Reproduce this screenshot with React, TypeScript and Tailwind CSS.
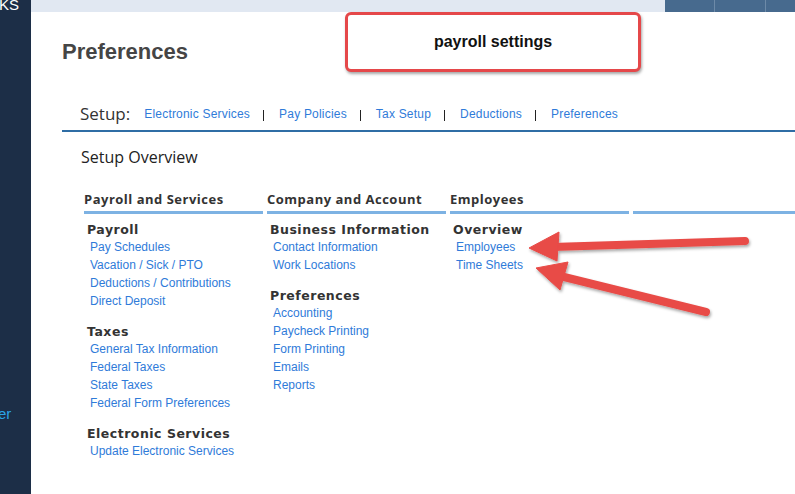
const columns = [
  {
    title: 'Payroll and Services',
    groups: [
      { name: 'Payroll', links: ['Pay Schedules', 'Vacation / Sick / PTO', 'Deductions / Contributions', 'Direct Deposit'] },
      { name: 'Taxes', links: ['General Tax Information', 'Federal Taxes', 'State Taxes', 'Federal Form Preferences'] },
      { name: 'Electronic Services', links: ['Update Electronic Services'] },
    ],
  },
  {
    title: 'Company and Account',
    groups: [
      { name: 'Business Information', links: ['Contact Information', 'Work Locations'] },
      { name: 'Preferences', links: ['Accounting', 'Paycheck Printing', 'Form Printing', 'Emails', 'Reports'] },
    ],
  },
  {
    title: 'Employees',
    groups: [{ name: 'Overview', links: ['Employees', 'Time Sheets'] }],
  },
  { title: '', groups: [] },
];

const setupLinks = ['Electronic Services', 'Pay Policies', 'Tax Setup', 'Deductions', 'Preferences'];

export default function App() {
  return (
    <div className="relative flex h-[494px] w-[795px] overflow-hidden bg-white font-['Liberation_Sans',Arial,sans-serif]">
      {/* Sidebar */}
      <div className="flex w-[31px] shrink-0 flex-col bg-[#1c2e47]">
        <div className="-ml-[1px] mt-[-4px] text-[15px] leading-[18px] text-white">KS</div>
        <div className="-ml-[2px] mt-[389px] text-[15px] text-[#2aa4e6]">er</div>
      </div>

      {/* Main */}
      <div className="flex flex-1 flex-col">
        <div className="flex h-[12px] bg-[#e1e8f2]">
          <div className="flex-1" />
          <div className="flex w-[130px] bg-[#476a8e]">
            <div className="w-[50px] border-r border-[#6d8aa8]" />
            <div className="w-[51px] border-r border-[#6d8aa8]" />
            <div className="flex-1" />
          </div>
        </div>

        <h1 className="ml-[31px] mt-[27px] text-[22px] font-bold leading-[26px] text-[#454545]">Preferences</h1>

        <div className="ml-[31px] mt-[38px] flex items-center border-b-2 border-[#2f6da5] pb-[5px] pl-[18px]">
          <span className="font-['Open_Sans',sans-serif] text-[17px] leading-[22px] text-[#333]">Setup:</span>
          <div className="ml-[14px] flex items-center text-[12px] tracking-[0.2px] text-[#2f7bd9]">
            {setupLinks.map((l, i) => (
              <span key={l} className="flex items-center">
                {i > 0 && <span className="ml-[13px] mr-[15px] mt-[2px] h-[11px] w-[1px] bg-[#222]" />}
                <span>{l}</span>
              </span>
            ))}
          </div>
        </div>

        <h2 className="ml-[50px] mt-[14px] font-['Open_Sans',sans-serif] text-[16px] leading-[22px] text-[#222]">Setup Overview</h2>

        <div className="ml-[53px] mt-[23px] grid grid-cols-[179px_179px_179px_1fr] gap-x-[4px]">
          {columns.map((c, ci) => (
            <div key={ci} className="flex flex-col">
              <div className="h-[20px] font-['Open_Sans',sans-serif] text-[13px] font-bold leading-[16px] tracking-[0.5px] text-[#333]">{c.title}</div>
              <div className="h-[3px] bg-[#7db2e3]" />
              <div className="mt-[8px] flex flex-col pl-[3px]">
                {c.groups.map((g, gi) => (
                  <div key={g.name} className={gi > 0 ? 'mt-[14px]' : ''}>
                    <div className="font-['DejaVu_Sans',sans-serif] text-[12.5px] font-bold leading-[16px] tracking-[0.5px] text-[#333]">{g.name}</div>
                    {g.links.map((l) => (
                      <div key={l} className="pl-[3px] text-[12px] leading-[18px] text-[#2f7bd9]">{l}</div>
                    ))}
                  </div>
                ))}
              </div>
            </div>
          ))}
        </div>
      </div>

      {/* Callout */}
      <div className="absolute left-[345px] top-[12px] flex h-[60px] w-[296px] items-center justify-center rounded-[6px] border-[3px] border-[#e5484a] bg-white shadow-[1px_2px_3px_rgba(0,0,0,0.35)]">
        <span className="text-[16px] font-bold text-[#111]">payroll settings</span>
      </div>

      {/* Arrows */}
      <svg className="absolute left-0 top-0" width="795" height="494" viewBox="0 0 795 494">
        <defs>
          <filter id="sh" x="-10%" y="-30%" width="120%" height="160%">
            <feDropShadow dx="1" dy="2" stdDeviation="1.5" floodColor="#000" floodOpacity="0.35" />
          </filter>
        </defs>
        <g fill="#e84b47" stroke="#e84b47" filter="url(#sh)">
          <line x1="745" y1="241" x2="552" y2="247" strokeWidth="8" strokeLinecap="round" />
          <polygon points="529,248 559,232 557,261" strokeWidth="1" strokeLinejoin="round" />
          <line x1="706" y1="312" x2="560" y2="276" strokeWidth="8" strokeLinecap="round" />
          <polygon points="536,268 568,262 560,290" strokeWidth="1" strokeLinejoin="round" />
        </g>
      </svg>
    </div>
  );
}
